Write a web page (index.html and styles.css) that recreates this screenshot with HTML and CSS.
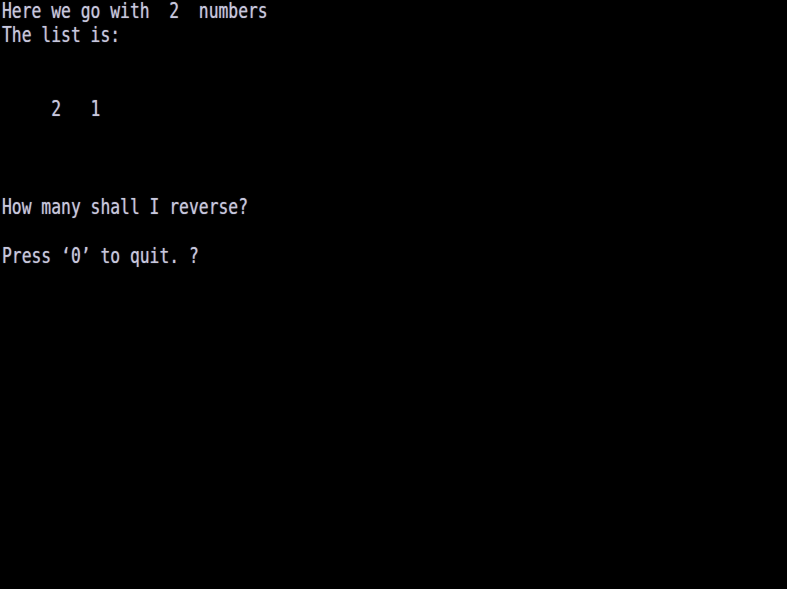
FILE: index.html
```html
<!DOCTYPE html>
<html>
<head>
<meta charset="utf-8">
<link rel="stylesheet" href="styles.css">
<title>Terminal</title>
</head>
<body>
<pre class="screen">Here we go with  2  numbers
The list is:


     2   1



How many shall I reverse?

Press ‘0’ to quit. ?</pre>
</body>
</html>
```

FILE: styles.css
```css
html, body {
  margin: 0;
  padding: 0;
  background: #000;
  width: 787px;
  height: 589px;
  overflow: hidden;
}

.screen {
  margin: 0;
  padding: 0 0 0 2px;
  font-family: "DejaVu Sans Mono", "Liberation Mono", monospace;
  font-size: 16.35px;
  line-height: 19.48px;
  color: #c8c8de;
  text-shadow: 0 0 1px rgba(200, 200, 222, 0.6);
  transform: scaleY(1.26) translateY(-1px);
  transform-origin: 0 0;
  white-space: pre;
}
```
